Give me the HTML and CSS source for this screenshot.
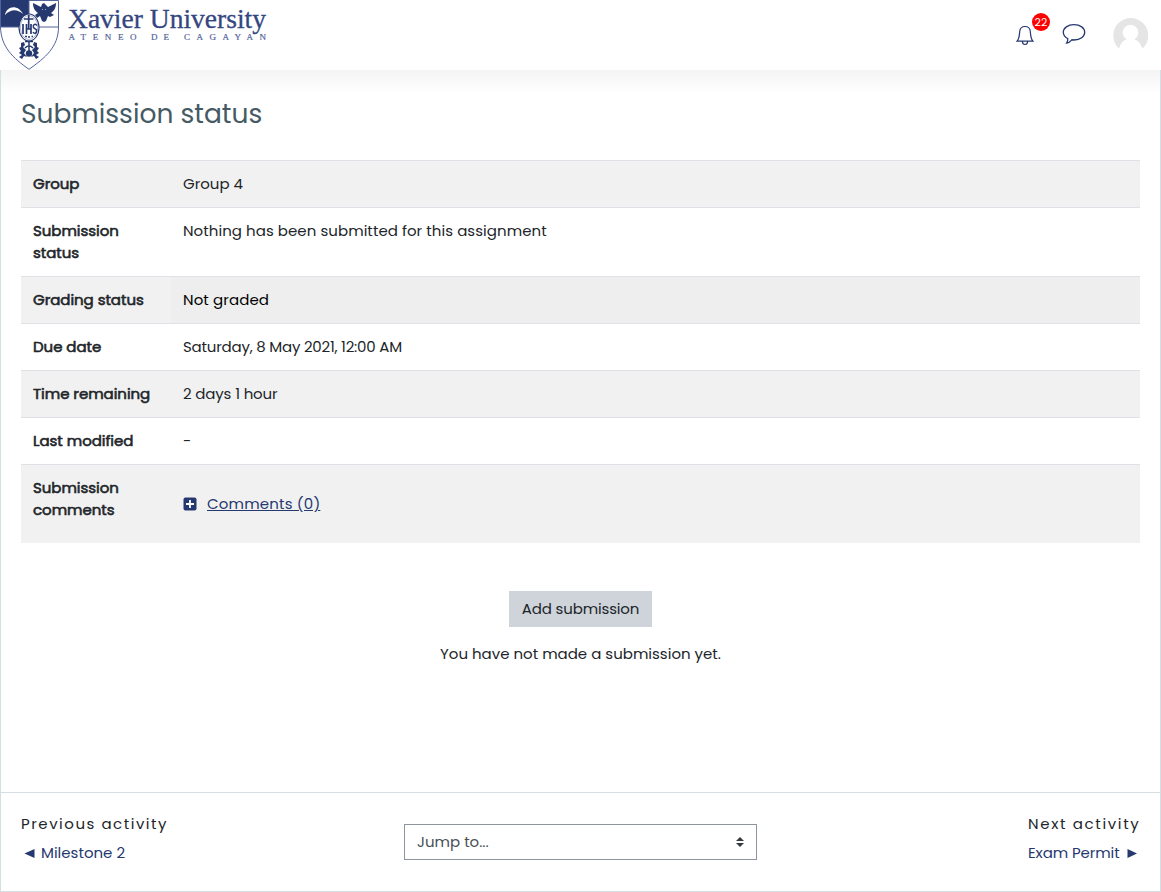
FILE: index.html
```
<!DOCTYPE html>
<html lang="en">
<head>
<meta charset="utf-8">
<title>Submission status</title>
<link rel="stylesheet" href="styles.css">
</head>
<body>
<header class="topbar">
  <svg class="brand" width="280" height="70" viewBox="0 0 280 70">
    <path d="M0 0H29V27H0Z" fill="#263870"/>
    <path d="M.5 0V27C1 47 13 58 29 69.3C45 58 58.5 47 58.5 27V.5H29V20M0 27H19M39 27H58" fill="none" stroke="#53639b"/>
    <path d="M5 15C6 7 17 3 23 14C17 9 11 9 5 15Z" fill="#fff"/>
    <path d="M33 3L41 7L42 4L44 3L46 5L48 7L56 3C56 8 54 11 51 13L54 15L50 17L48 16L46 21L44 22L42 21L40 16L37 18L35 15L38 13C35 11 33 8 33 3Z" fill="#263870"/>
    <path d="M42 9L43 10M46 9L45 10" stroke="#fff" stroke-width=".6"/>
    <ellipse cx="29" cy="27.5" rx="10" ry="13.5" fill="#fff" stroke="#263870" stroke-width="1.1"/>
    <ellipse cx="29" cy="27.5" rx="8.6" ry="12" fill="none" stroke="#8d99bd" stroke-width=".7"/>
    <path d="M28.700 15V29M24 19H33.500M23 24V34M26.500 24V34M31 24V34M26.500 29H31" fill="none" stroke="#263870" stroke-width="1.700"/>
    <path d="M37 25.500C35 23 32.500 25 33.500 27.500L36.500 30C37 34 34 34 33 32M25 36.500H27M28 37H30M31.500 36.500H33" fill="none" stroke="#263870" stroke-width="1.500"/>
    <path d="M25 41.500H33M29 42V51M25 48C28 45 30 45 33 48" fill="none" stroke="#263870" stroke-width="1.500"/>
    <circle cx="29" cy="53.500" r="3.200" fill="#263870"/>
    <path d="M21 43L24 42L25 45L23 47L26 50L24 53L27 57L24 56L22 59L19 57L22 55L19 53L21 51L19 48L21 47Z M37 43L34 42L33 45L35 47L32 50L34 53L31 57L34 56L36 59L39 57L36 55L39 53L37 51L39 48L37 47Z" fill="#263870"/>
    <text class="brand-name" x="68" y="28" textLength="198" lengthAdjust="spacingAndGlyphs">Xavier University</text>
    <text class="brand-sub" x="68.500" y="40" textLength="68">ATENEO</text>
    <text class="brand-sub" x="151" y="40" textLength="18">DE</text>
    <text class="brand-sub" x="184" y="40" textLength="82">CAGAYAN</text>
  </svg>
  <div class="tools">
    <div class="bell">
      <svg width="18" height="21" viewBox="0 0 18 21" fill="none" stroke="#263870" stroke-width="1.200">
        <path d="M1 16.200H17C14.700 13.800 14.700 11.500 14.300 6.500C14 3.200 12 1.500 9 1.500S4 3.200 3.700 6.500C3.300 11.500 3.300 13.800 1 16.200ZM6.400 16.500C6.500 20.500 11.500 20.500 11.600 16.500"/>
      </svg>
      <span class="badge">22</span>
    </div>
    <svg class="bubble" width="24" height="22" viewBox="0 0 24 22" fill="none" stroke="#263870" stroke-width="1.300">
      <path d="M12 1.700C18.300 1.700 22.700 5 22.700 9.300C22.700 13.800 18.300 17 12 17L9.800 16.800C8 19 6.500 19.800 4.600 20C5.500 18.500 6 17.200 5.800 15.600C3 14.300 1.300 12 1.300 9.300C1.300 5 5.800 1.700 12 1.700Z"/>
    </svg>
    <svg class="avatar" width="35" height="35" viewBox="0 0 35 35">
      <path d="M6 30.500A17.500 17.500 0 1 1 29.500 30.500C27.500 25.500 25 22.500 21.500 21.300A7.800 7.800 0 1 0 13.500 21.300C10 22.500 7.500 25.500 6 30.500Z" fill="#e5e5e5"/>
    </svg>
  </div>
</header>
<main class="page">
  <section class="content">
    <h1 class="title">Submission status</h1>
    <div class="status">
      <div class="row"><b class="key">Group</b><span class="val">Group 4</span></div>
      <div class="row"><b class="key">Submission<br>status</b><span class="val v-none">Nothing has been submitted for this assignment</span></div>
      <div class="row"><b class="key">Grading status</b><span class="val graded">Not graded</span></div>
      <div class="row"><b class="key">Due date</b><span class="val v-date">Saturday, 8 May 2021, 12:00 AM</span></div>
      <div class="row"><b class="key">Time remaining</b><span class="val v-time">2 days 1 hour</span></div>
      <div class="row"><b class="key">Last modified</b><span class="val">-</span></div>
      <div class="row last"><b class="key">Submission<br>comments</b><a class="val comments"><svg width="14" height="14" viewBox="0 0 14 14"><rect x=".5" y=".5" width="13" height="13" rx="2" fill="#263870"/><path d="M7 3V11M3 7H11" stroke="#fff" stroke-width="1.800"/></svg><span class="link">Comments (0)</span></a></div>
    </div>
    <div class="action">
      <button class="add">Add submission</button>
      <p class="note">You have not made a submission yet.</p>
    </div>
  </section>
  <nav class="activity">
    <div class="side"><span class="label">Previous activity</span><a class="go"><svg width="18" height="12" viewBox="0 0 18 12"><path d="M3.500 6.500L13.500 2V11Z" fill="#263870"/></svg><span>Milestone 2</span></a></div>
    <div class="jump"><span>Jump to...</span><svg width="8" height="10" viewBox="0 0 8 10"><path d="M4 0L8 4H0ZM0 6H8L4 10Z" fill="#343a40"/></svg></div>
    <div class="side next"><span class="label nxt">Next activity</span><a class="go"><span class="exam">Exam Permit</span><svg width="18" height="12" viewBox="0 0 18 12"><path d="M5.500 2V11L15 6.500Z" fill="#263870"/></svg></a></div>
  </nav>
</main>
</body>
</html>
```
FILE: styles.css
```
* { box-sizing: border-box; }
body { margin: 0; height: 892px; display: flex; flex-direction: column; background: #fff; color: #212529; font: 15px/22px Poppins, Inter, sans-serif; overflow: hidden; }
.topbar { height: 70px; flex: none; display: flex; justify-content: space-between; background: #fff; }
.brand-name { font: 27px "Liberation Serif", serif; fill: #344681; stroke: #344681; stroke-width: .3px; }
.brand-sub { font: 9px "Liberation Serif", serif; fill: #53639b; stroke: #53639b; stroke-width: .2px; }
.tools { display: flex; padding: 18px 13px 0 0; }
.bell { position: relative; width: 18px; height: 21px; margin: 7px 28px 0 0; }
.bell svg { display: block; }
.badge { position: absolute; left: 16px; top: -12px; width: 18px; height: 18px; border-radius: 50%; background: #f00; color: #fff; font-size: 11px; line-height: 18px; text-align: center; letter-spacing: .3px; }
.bubble { margin: 5px 27px 0 0; }
.avatar { display: block; }
.page { flex: 1; display: flex; flex-direction: column; border: solid #d5dee2; border-width: 0 1px 1px; background: linear-gradient(#f4f4f4, #fff 23px); }
.content { height: 722px; padding: 27px 20px 0; }
.title { margin: 0 0 30px; font-size: 26.500px; font-weight: 400; line-height: 33px; color: #455a64; }
.status { display: flex; flex-direction: column; }
.row { display: flex; border-top: 1px solid #dee2e6; }
.row:nth-child(odd) { background: #f1f1f1; }
.key { width: 150px; padding: 12px 0 12px 12px; font-weight: 400; letter-spacing: -.04px; -webkit-text-stroke: .6px #212529; }
.val { flex: 1; padding: 12px; }
.v-none { letter-spacing: .05px; }
.v-date { letter-spacing: -.21px; }
.v-time { letter-spacing: -.15px; }
.row:nth-child(odd) .graded { background: #eee; color: #000; letter-spacing: .1px; }
.last { height: 79px; }
.comments { display: flex; align-items: center; gap: 10px; color: #263870; }
.link { text-decoration: underline; letter-spacing: .17px; }
.action { display: flex; flex-direction: column; align-items: center; padding-top: 48px; }
.add { width: 143px; height: 36px; padding: 0; border: 0; background: #ced4da; color: #212529; font: inherit; letter-spacing: -.15px; }
.note { margin: 16px 0 0; }
.activity { flex: 1; display: grid; grid-template-columns: 1fr 353px 1fr; border-top: 1px solid #d5dee2; padding: 20px 20px 0; }
.side { display: flex; flex-direction: column; gap: 7px; }
.next { width: 112px; justify-self: end; }
.label { white-space: nowrap; letter-spacing: 1.520px; }
.nxt { letter-spacing: 1.650px; }
.exam { letter-spacing: -.1px; }
.go { display: flex; align-items: center; gap: 2px; color: #263870; white-space: nowrap; }
.jump { height: 36px; margin-top: 11px; padding: 0 12px; border: 1px solid #8f959e; display: flex; align-items: center; justify-content: space-between; color: #495057; }
```
